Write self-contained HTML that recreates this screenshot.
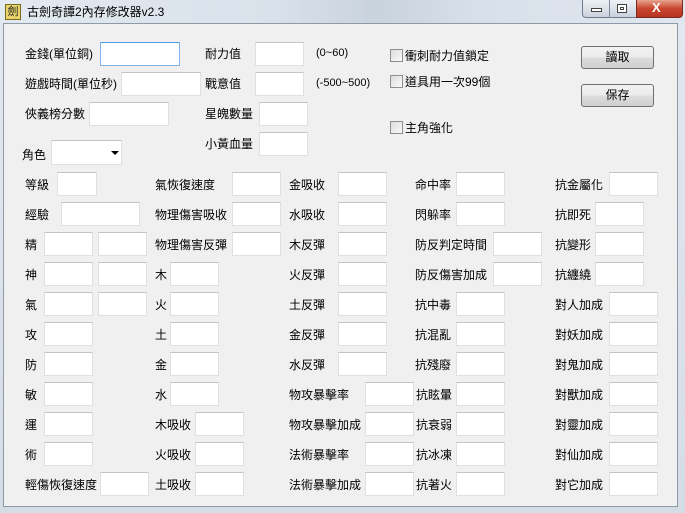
<!DOCTYPE html>
<html><head><meta charset="utf-8">
<style>
*{margin:0;padding:0;box-sizing:border-box}
body{width:685px;height:513px;overflow:hidden;position:relative;background:#dbe3ec;font-family:"Liberation Sans","Noto Sans CJK TC","Noto Sans CJK SC",sans-serif;font-size:12px;color:#000}
#tb{position:absolute;left:0;top:0;width:685px;height:24px;background:linear-gradient(90deg,#e3e9f0 0%,#d9e1ea 40%,#c9d3de 55%,#d8e0e9 70%,#e0e6ee 100%)}
#frame{position:absolute;left:0;top:22px;width:685px;height:491px;background:linear-gradient(#e2e8ef,#d4dce6)}
#panel{position:absolute;left:3px;top:23px;width:675px;height:484px;background:#f0f0f0;border:1px solid #8e9aa8}
.l{position:absolute;white-space:nowrap;line-height:14px;font-size:12px}
.i{position:absolute;width:49px;height:24px;background:#fff;border:1px solid #e0e0e0;border-top-color:#c4c4c4}
.cb{position:absolute;width:13px;height:13px;border:1px solid #8f8f8f;background:linear-gradient(135deg,#dcdcdc,#fafafa)}
.btn{position:absolute;width:73px;height:23px;border:1px solid #707070;border-radius:3px;background:linear-gradient(#f2f2f2 0%,#ebebeb 50%,#dddddd 51%,#cfcfcf 100%);text-align:center;line-height:21px}
</style></head><body>
<div id="frame"></div>
<div id="tb"></div>
<div style="position:absolute;left:5px;top:4px;width:16px;height:16px;background:#e8d46a;border:1px solid #7a6a20;font-size:11px;line-height:14px;text-align:center;color:#222">劍</div>
<div class="l" style="left:27px;top:5px;font-size:12px">古劍奇譚2內存修改器v2.3</div>
<div style="position:absolute;left:582px;top:0;width:55px;height:18px;border:1px solid #6d7b8c;border-top:none;border-radius:0 0 0 4px;background:linear-gradient(#eef2f6,#c9d2dd)"></div>
<div style="position:absolute;left:591px;top:8px;width:11px;height:4px;border:1px solid #444;background:#fff"></div>
<div style="position:absolute;left:609px;top:0;width:1px;height:18px;background:#7d8898"></div>
<div style="position:absolute;left:617px;top:4px;width:10px;height:9px;border:1px solid #444;background:#fff"><div style="margin:2px;width:4px;height:3px;border:1px solid #444"></div></div>
<div style="position:absolute;left:636px;top:0;width:47px;height:18px;border:1px solid #7a2a20;border-top:none;border-radius:0 0 4px 0;background:linear-gradient(#e8a590,#c8452f 50%,#b83520)"></div>
<div class="l" style="left:652px;top:1px;color:#fff;font-weight:bold;font-size:13px">X</div>
<div id="panel"></div>

<!-- top section -->
<div class="l" style="left:25px;top:47px">金錢(單位銅)</div>
<div class="i" style="left:100px;top:42px;width:80px;border-color:#7eb4ea;border-top-color:#569de5"></div>
<div class="l" style="left:25px;top:77px">遊戲時間(單位秒)</div>
<div class="i" style="left:121px;top:72px;width:80px"></div>
<div class="l" style="left:25px;top:107px">俠義榜分數</div>
<div class="i" style="left:89px;top:102px;width:80px"></div>
<div class="l" style="left:22px;top:148px">角色</div>
<div class="i" style="left:51px;top:140px;width:71px;height:25px"></div>
<div style="position:absolute;left:111px;top:151px;width:0;height:0;border-left:4px solid transparent;border-right:4px solid transparent;border-top:4px solid #000"></div>

<div class="l" style="left:205px;top:47px">耐力值</div>
<div class="i" style="left:255px;top:42px"></div>
<div class="l" style="left:316px;top:46px;font-size:11px">(0~60)</div>
<div class="l" style="left:205px;top:77px">戰意值</div>
<div class="i" style="left:255px;top:72px"></div>
<div class="l" style="left:316px;top:76px;font-size:11px">(-500~500)</div>
<div class="l" style="left:205px;top:107px">星魄數量</div>
<div class="i" style="left:259px;top:102px"></div>
<div class="l" style="left:205px;top:137px">小黃血量</div>
<div class="i" style="left:259px;top:132px"></div>

<div class="cb" style="left:390px;top:49px"></div><div class="l" style="left:405px;top:49px">衝刺耐力值鎖定</div>
<div class="cb" style="left:390px;top:75px"></div><div class="l" style="left:405px;top:75px">道具用一次99個</div>
<div class="cb" style="left:390px;top:121px"></div><div class="l" style="left:405px;top:121px">主角強化</div>

<div class="btn" style="left:581px;top:46px">讀取</div>
<div class="btn" style="left:581px;top:84px">保存</div>

<!-- col1 -->
<div class="l" style="left:25px;top:178px">等級</div><div class="i" style="left:57px;top:172px;width:40px"></div>
<div class="l" style="left:25px;top:208px">經驗</div><div class="i" style="left:61px;top:202px;width:79px"></div>
<div class="l" style="left:25px;top:238px">精</div><div class="i" style="left:44px;top:232px"></div><div class="i" style="left:98px;top:232px"></div>
<div class="l" style="left:25px;top:268px">神</div><div class="i" style="left:44px;top:262px"></div><div class="i" style="left:98px;top:262px"></div>
<div class="l" style="left:25px;top:298px">氣</div><div class="i" style="left:44px;top:292px"></div><div class="i" style="left:98px;top:292px"></div>
<div class="l" style="left:25px;top:328px">攻</div><div class="i" style="left:44px;top:322px"></div>
<div class="l" style="left:25px;top:358px">防</div><div class="i" style="left:44px;top:352px"></div>
<div class="l" style="left:25px;top:388px">敏</div><div class="i" style="left:44px;top:382px"></div>
<div class="l" style="left:25px;top:418px">運</div><div class="i" style="left:44px;top:412px"></div>
<div class="l" style="left:25px;top:448px">術</div><div class="i" style="left:44px;top:442px"></div>
<div class="l" style="left:25px;top:478px">輕傷恢復速度</div><div class="i" style="left:100px;top:472px"></div>

<!-- col2 -->
<div class="l" style="left:155px;top:178px">氣恢復速度</div><div class="i" style="left:232px;top:172px"></div>
<div class="l" style="left:155px;top:208px">物理傷害吸收</div><div class="i" style="left:232px;top:202px"></div>
<div class="l" style="left:155px;top:238px">物理傷害反彈</div><div class="i" style="left:232px;top:232px"></div>
<div class="l" style="left:155px;top:268px">木</div><div class="i" style="left:170px;top:262px"></div>
<div class="l" style="left:155px;top:298px">火</div><div class="i" style="left:170px;top:292px"></div>
<div class="l" style="left:155px;top:328px">土</div><div class="i" style="left:170px;top:322px"></div>
<div class="l" style="left:155px;top:358px">金</div><div class="i" style="left:170px;top:352px"></div>
<div class="l" style="left:155px;top:388px">水</div><div class="i" style="left:170px;top:382px"></div>
<div class="l" style="left:155px;top:418px">木吸收</div><div class="i" style="left:195px;top:412px"></div>
<div class="l" style="left:155px;top:448px">火吸收</div><div class="i" style="left:195px;top:442px"></div>
<div class="l" style="left:155px;top:478px">土吸收</div><div class="i" style="left:195px;top:472px"></div>

<!-- col3 -->
<div class="l" style="left:289px;top:178px">金吸收</div><div class="i" style="left:338px;top:172px"></div>
<div class="l" style="left:289px;top:208px">水吸收</div><div class="i" style="left:338px;top:202px"></div>
<div class="l" style="left:289px;top:238px">木反彈</div><div class="i" style="left:338px;top:232px"></div>
<div class="l" style="left:289px;top:268px">火反彈</div><div class="i" style="left:338px;top:262px"></div>
<div class="l" style="left:289px;top:298px">土反彈</div><div class="i" style="left:338px;top:292px"></div>
<div class="l" style="left:289px;top:328px">金反彈</div><div class="i" style="left:338px;top:322px"></div>
<div class="l" style="left:289px;top:358px">水反彈</div><div class="i" style="left:338px;top:352px"></div>
<div class="l" style="left:289px;top:388px">物攻暴擊率</div><div class="i" style="left:365px;top:382px"></div>
<div class="l" style="left:289px;top:418px">物攻暴擊加成</div><div class="i" style="left:365px;top:412px"></div>
<div class="l" style="left:289px;top:448px">法術暴擊率</div><div class="i" style="left:365px;top:442px"></div>
<div class="l" style="left:289px;top:478px">法術暴擊加成</div><div class="i" style="left:365px;top:472px"></div>

<!-- col4 -->
<div class="l" style="left:415px;top:178px">命中率</div><div class="i" style="left:456px;top:172px"></div>
<div class="l" style="left:415px;top:208px">閃躲率</div><div class="i" style="left:456px;top:202px"></div>
<div class="l" style="left:415px;top:238px">防反判定時間</div><div class="i" style="left:493px;top:232px"></div>
<div class="l" style="left:415px;top:268px">防反傷害加成</div><div class="i" style="left:493px;top:262px"></div>
<div class="l" style="left:415px;top:298px">抗中毒</div><div class="i" style="left:456px;top:292px"></div>
<div class="l" style="left:415px;top:328px">抗混亂</div><div class="i" style="left:456px;top:322px"></div>
<div class="l" style="left:415px;top:358px">抗殘廢</div><div class="i" style="left:456px;top:352px"></div>
<div class="l" style="left:416px;top:388px">抗眩暈</div><div class="i" style="left:456px;top:382px"></div>
<div class="l" style="left:416px;top:418px">抗衰弱</div><div class="i" style="left:456px;top:412px"></div>
<div class="l" style="left:416px;top:448px">抗冰凍</div><div class="i" style="left:456px;top:442px"></div>
<div class="l" style="left:416px;top:478px">抗著火</div><div class="i" style="left:456px;top:472px"></div>

<!-- col5 -->
<div class="l" style="left:555px;top:178px">抗金屬化</div><div class="i" style="left:609px;top:172px"></div>
<div class="l" style="left:555px;top:208px">抗即死</div><div class="i" style="left:595px;top:202px"></div>
<div class="l" style="left:555px;top:238px">抗變形</div><div class="i" style="left:595px;top:232px"></div>
<div class="l" style="left:555px;top:268px">抗纏繞</div><div class="i" style="left:595px;top:262px"></div>
<div class="l" style="left:555px;top:298px">對人加成</div><div class="i" style="left:609px;top:292px"></div>
<div class="l" style="left:555px;top:328px">對妖加成</div><div class="i" style="left:609px;top:322px"></div>
<div class="l" style="left:555px;top:358px">對鬼加成</div><div class="i" style="left:609px;top:352px"></div>
<div class="l" style="left:555px;top:388px">對獸加成</div><div class="i" style="left:609px;top:382px"></div>
<div class="l" style="left:555px;top:418px">對靈加成</div><div class="i" style="left:609px;top:412px"></div>
<div class="l" style="left:555px;top:448px">對仙加成</div><div class="i" style="left:609px;top:442px"></div>
<div class="l" style="left:555px;top:478px">對它加成</div><div class="i" style="left:609px;top:472px"></div>
</body></html>
